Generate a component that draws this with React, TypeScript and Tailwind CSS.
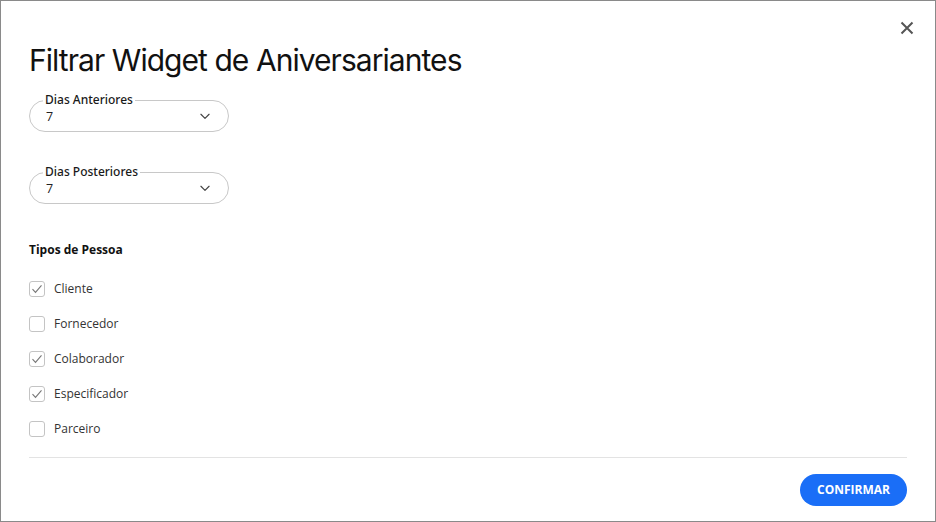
import React from "react";

function Chevron() {
  return (
    <svg width="14" height="14" viewBox="0 0 24 24" fill="none" stroke="#444" strokeWidth="2" strokeLinecap="round" strokeLinejoin="round">
      <path d="M5 9l7 7 7-7" />
    </svg>
  );
}

function Select({ label }: { label: string }) {
  return (
    <div className="relative w-[200px] h-[32px] rounded-full border border-[#c8c8c8] flex items-center justify-between pl-[16px] pr-[16px]">
      <span className="absolute -top-[8px] left-[13px] bg-white px-[2px] text-[12px] leading-[14px] text-[#1a1a1a] font-semibold" style={{ fontFamily: '"Noto Sans", sans-serif', fontWeight: 500 }}>{label}</span>
      <span className="text-[12.5px] text-[#222] pt-[2px]">7</span>
      <Chevron />
    </div>
  );
}

function Check({ label, checked }: { label: string; checked: boolean }) {
  return (
    <div className="flex items-center h-[35px] gap-[9px]">
      <div className="w-[16px] h-[16px] rounded-[3px] border border-[#c4c4c4] flex items-center justify-center">
        {checked && (
          <svg width="12" height="12" viewBox="0 0 12 12" fill="none" stroke="#777" strokeWidth="1.1">
            <path d="M1.5 6.2l3 3.2 6-7" />
          </svg>
        )}
      </div>
      <span className="text-[12px] text-[#333]">{label}</span>
    </div>
  );
}

export default function App() {
  return (
    <div className="w-[936px] h-[522px] border border-[#8a8a8a] bg-white relative" style={{ fontFamily: '"Open Sans", "Noto Sans", sans-serif' }}>
      <button className="absolute right-[20px] top-[19px] text-[#555]">
        <svg width="16" height="16" viewBox="0 0 16 16" stroke="#555" strokeWidth="2">
          <path d="M2.5 2.5l11 11M13.5 2.5l-11 11" />
        </svg>
      </button>
      <div className="px-[28px] pt-[40px]">
        <h1 className="text-[30px] leading-[38px] text-[#111] tracking-[-0.95px]" style={{ fontFamily: 'Inter, sans-serif' }}>
          Filtrar Widget de Aniversariantes
        </h1>
        <div className="mt-[21px]">
          <Select label="Dias Anteriores" />
        </div>
        <div className="mt-[40px]">
          <Select label="Dias Posteriores" />
        </div>
        <div className="mt-[37px] text-[12px] font-bold text-[#111]">Tipos de Pessoa</div>
        <div className="mt-[12px] flex flex-col">
          <Check label="Cliente" checked />
          <Check label="Fornecedor" checked={false} />
          <Check label="Colaborador" checked />
          <Check label="Especificador" checked />
          <Check label="Parceiro" checked={false} />
        </div>
        <div className="mt-[11px] border-t border-[#e3e3e3]" />
        <div className="flex justify-end mt-[16px]">
          <button className="h-[32px] px-[17px] rounded-full bg-[#1a6ef7] text-white text-[12px] font-bold">
            CONFIRMAR
          </button>
        </div>
      </div>
    </div>
  );
}
